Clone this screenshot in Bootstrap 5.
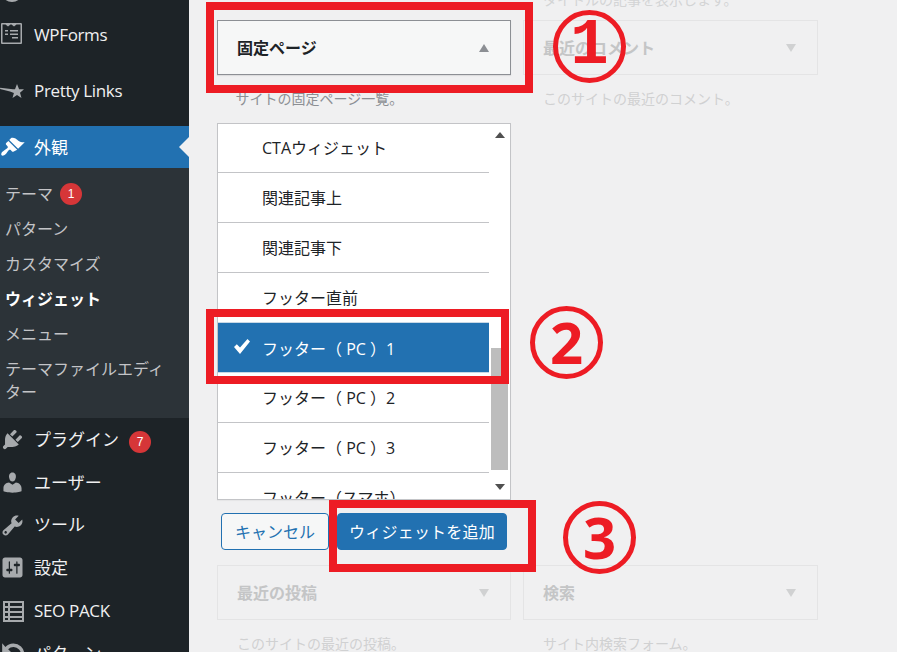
<!DOCTYPE html>
<html lang="ja"><head><meta charset="utf-8"><title>ウィジェット</title>
<link href="https://cdn.jsdelivr.net/npm/bootstrap@5.3.0/dist/css/bootstrap.min.css" rel="stylesheet">
<style>
html,body{height:652px;overflow:hidden}
body{background:#f0f0f1;font-family:"Open Sans","Noto Sans CJK JP",sans-serif;color:#1d2327;position:relative}
.stage{height:652px;overflow:hidden}
.side{width:189px;flex:none;background:#1d2327;color:#f0f0f1;height:652px;overflow:hidden;position:relative}
.clipicon{height:3px;overflow:hidden;margin-bottom:11px}
.clipicon svg{display:block;margin:-21px 0 0 2px}
.mitem{height:42.7px;padding-left:2px;font-size:17px;gap:9px;white-space:nowrap}
.mitem svg{width:25px;height:25px;flex:none;fill:#a7aaad;margin:0 0 0 -2px}
.mitem svg.wpf{width:21px;height:21px;margin:-3px 3px 0 -1px}
.mitem svg.pl{width:24px;height:15px;margin:0 1px 0 -2px}
.mgap{margin-bottom:14px;height:42px}
.latin{letter-spacing:-.35px}
.mactive{background:#2271b1;color:#fff;height:42px;padding-top:1px}
.mactive svg{fill:#fff}
.notch{position:absolute;right:0;top:137px;border:10px solid transparent;border-right-color:#f0f0f1;border-left-width:0}
.subm{background:#2c3338;padding:8.5px 0 7px;color:#c3c4c7;font-size:16px;height:250px;margin-bottom:.5px}
.subm a{display:flex;align-items:center;min-height:35.2px;padding-left:5px;line-height:23px;color:inherit;text-decoration:none;gap:7px}
.subm a.cur{color:#fff;font-weight:700}
.subm a.two{padding:6px 10px 6px 5px}
.cnt{width:22px;height:22px;background:#d63638;color:#fff;font-size:12px;display:inline-flex;align-items:center;justify-content:center;border-radius:50%;margin-left:10px;font-family:"Liberation Sans",sans-serif}
.subm .cnt{margin-left:0}
.wmain{flex:1;padding-left:28px;min-width:0}
.topline{grid-column:2;height:7px;font-size:14px;line-height:0;color:#d3d4d5;overflow:hidden;padding-left:20px;white-space:nowrap;margin-bottom:13px}
.wgrid{display:grid;grid-template-columns:294px 295px;column-gap:12px}
.wbox{height:55px;border:1px solid #e4e4e5;padding:0 19px;font-size:16px;font-weight:700;color:#c4c5c6}
.wbox.on{background:#f6f7f7;border-color:#8c8f94;color:#1d2327;box-shadow:0 1px 1px rgba(0,0,0,.08)}
.tri{width:0;height:0;border:5px solid transparent;border-top:8px solid #d0d1d2;border-bottom:0;margin-right:2px}
.tri.up{border-top:0;border-bottom:8px solid #8c8f94}
.wdesc{font-size:14px;color:#d0d1d2;padding:13px 18px 0 20px;height:48px;line-height:21px;white-space:nowrap}
.wdesc.on{color:#8c8f94;padding-left:18.500px}
.chooser{height:377px;border:1px solid #c3c4c7;background:#fff;overflow:hidden;box-shadow:0 1px 1px rgba(0,0,0,.04)}
.opts{width:271px;flex:none;border-radius:0;--bs-list-group-border-color:#c3c4c7}
.opts .list-group-item{flex:none;height:50px;padding:0 0 0 44px;border-width:0 0 1px;font-size:16px;color:#1d2327;display:flex;align-items:center;background:#fff;white-space:pre;position:relative}
.opts .list-group-item:first-child{height:49px}
.opts .list-group-item.sel{background:#2271b1;color:#fff;border:solid #c8d8e6;border-width:1px 0;padding-top:2px;padding-left:44px;margin-top:-1px;height:51px}
.opts .list-group-item.sel svg{position:absolute;left:15px;top:15px;width:18px;height:18px;fill:#fff}
.sbar{width:21px;padding:8px 0 0;height:100%;background:#fff}
.arrow{width:0;height:0;border:5px solid transparent;margin:0 auto}
.arrow.a1{border-top:0;border-bottom:6px solid #505050}
.arrow.a2{border-bottom:0;border-top:6px solid #505050;margin-top:14px}
.thumb{width:17px;height:122px;background:#bdbdbd;margin-top:210px;margin-left:2px}
.btnrow{height:65px;padding:13px 0 0 4px;gap:8px}
.btn.bcancel,.btn.badd{font-size:16px;height:37px;padding:0;border-radius:4px;line-height:34px;white-space:nowrap}
.btn.bcancel{width:108px;color:#2271b1;border-color:#2271b1;background:#f6f7f7}
.btn.badd{width:170px;background:#2271b1;border-color:#2271b1;color:#fff;letter-spacing:.2px}
.redbox{position:absolute;border:8px solid #ed1c24;pointer-events:none}
.rb1{left:206px;top:2px;width:327px;height:91px}
.rb2{left:206px;top:309px;width:303px;height:75px}
.rb3{left:329px;top:500px;width:207px;height:72px}
.num{position:absolute;width:73px;height:73px;border:5px solid #ed1c24;border-radius:50%;color:#ed1c24;font:700 58px/61px "Noto Sans","Open Sans",sans-serif;text-align:center}
.n1{left:553px;top:10px;font-family:"Liberation Mono",monospace;font-size:64px;line-height:62px}.n2{left:530px;top:306px}.n3{left:563px;top:501px}
</style></head><body>
<div class="stage d-flex">
<nav class="side">
 <div class="clipicon"><svg width="20" height="24" viewBox="0 0 20 24"><circle cx="10" cy="12" r="10" fill="none" stroke="#a7aaad" stroke-width="2"/></svg></div>
 <div class="mitem mgap d-flex align-items-center"><svg class="wpf" viewBox="1 1 21 21"><path fill-rule="evenodd" d="M2 1h19a1.500 1.500 0 0 1 1 1v19a1 1 0 0 1-1 1H2a1 1 0 0 1-1-1V2a1 1 0 0 1 1-1zm.500 1.500v18h18v-18h-4l-2.500 2-2.500-2h-1l-2.500 2-2.500-2zM5 8h3v1.500H5zm5 0h8v1.500h-8zM5 11.500h3V13H5zm5 0h8V13h-8zM12 15h6v1.500h-6z"/></svg><span class="latin">WPForms</span></div>
 <div class="mitem mgap d-flex align-items-center"><svg class="pl" viewBox="0 0 24 15"><path d="M17 0l2.100 5.300H24l-4 3.500 1.500 5.200-4.500-3-4.500 3 1.400-5L10 7.500 0 5 .2 3.800 13 5.300h2z"/></svg><span class="latin">Pretty Links</span></div>
 <div class="mitem mactive d-flex align-items-center"><svg viewBox="0 0 20 20"><path d="M14.480 11.060L7.410 3.990l1.500-1.500c.5-.56 2.300-.47 3.510.32 1.210.8 1.430 1.280 2.910 2.100 1.180.64 2.450 1.260 4.450.85zm-.71.71L6.700 4.700 4.930 6.470c-.39.39-.39 1.020 0 1.410l1.060 1.060c.39.39.39 1.030 0 1.420-.6.6-1.430 1.110-2.210 1.690-.35.26-.7.53-1.010.84C1.430 13.710 1 14.650 1 15.500c0 .28.11.53.29.71.19.19.45.29.71.29.86 0 1.790-.43 2.630-1.230.29-.3.56-.65.82-1.010.58-.78 1.100-1.610 1.690-2.210.39-.39 1.030-.39 1.420 0l1.060 1.060c.39.39 1.020.39 1.410 0z"/></svg><span>外観</span></div>
 <div class="notch"></div>
 <div class="subm">
  <a href="#">テーマ <span class="cnt">1</span></a><a href="#">パターン</a><a href="#">カスタマイズ</a><a href="#" class="cur">ウィジェット</a><a href="#">メニュー</a><a href="#" class="two">テーマファイルエディター</a>
 </div>
 <div class="mitem d-flex align-items-center"><svg viewBox="0 0 20 20"><path d="M13.110 4.360L9.870 7.600 8 5.730l3.240-3.240c.35-.34 1.050-.2 1.560.32.52.51.66 1.210.31 1.550zm-8 1.770l.91-1.120 9.010 9.010-1.190.84c-.71.71-2.630 1.160-3.820 1.160H6.140L4.900 17.260c-.59.59-1.540.59-2.120 0-.59-.58-.59-1.530 0-2.120l1.240-1.240v-3.880c0-1.130.4-3.190 1.090-3.890zm7.260 3.970l3.240-3.240c.34-.35 1.040-.21 1.550.31.52.51.66 1.210.31 1.550l-3.240 3.250z"/></svg><span>プラグイン<span class="cnt">7</span></span></div>
 <div class="mitem d-flex align-items-center"><svg viewBox="0 0 20 20"><path d="M10 9.250c-2.270 0-2.730-3.440-2.730-3.440C7 4.020 7.820 2 9.970 2c2.160 0 2.980 2.020 2.710 3.810 0 0-.41 3.440-2.680 3.440zm0 2.570L12.720 10c2.390 0 4.520 2.330 4.520 4.530v2.490s-3.650 1.130-7.240 1.130c-3.650 0-7.240-1.130-7.240-1.130v-2.490c0-2.250 1.940-4.480 4.470-4.480z"/></svg><span>ユーザー</span></div>
 <div class="mitem d-flex align-items-center"><svg viewBox="0 0 20 20"><path d="M16.680 9.770c-1.340 1.340-3.300 1.670-4.950.99l-5.410 6.520c-.99.99-2.590.99-3.580 0s-.99-2.590 0-3.570l6.520-5.420c-.68-1.650-.35-3.610.99-4.950 1.280-1.280 3.120-1.620 4.720-1.060l-2.890 2.890 2.820 2.820 2.860-2.870c.53 1.580.18 3.390-1.080 4.650zM3.810 16.210c.4.39 1.040.39 1.430 0 .4-.4.4-1.040 0-1.430-.39-.4-1.030-.4-1.430 0-.39.39-.39 1.030 0 1.430z"/></svg><span>ツール</span></div>
 <div class="mitem d-flex align-items-center"><svg viewBox="0 0 20 20"><path d="M18 16V4c0-1.100-.9-2-2-2H4c-1.100 0-2 .9-2 2v12c0 1.100.9 2 2 2h12c1.100 0 2-.9 2-2zM8 11h1c.55 0 1 .45 1 1s-.45 1-1 1H8v1.500c0 .28-.22.5-.5.5s-.5-.22-.5-.5V13H6c-.55 0-1-.45-1-1s.45-1 1-1h1V5.500c0-.28.22-.5.5-.5s.5.22.5.5V11zm5-2h-1c-.55 0-1-.45-1-1s.45-1 1-1h1V5.500c0-.28.22-.5.5-.5s.5.22.5.5V7h1c.55 0 1 .45 1 1s-.45 1-1 1h-1v5.500c0 .28-.22.5-.5.5s-.5-.22-.5-.5V9z"/></svg><span>設定</span></div>
 <div class="mitem d-flex align-items-center"><svg viewBox="0 0 25 25"><path fill-rule="evenodd" d="M3 3h21v21H3zm2 2v3h3V5zm5 0v3h12V5zM5 10v3h3v-3zm5 0v3h12v-3zM5 15v3h3v-3zm5 0v3h12v-3zM5 20v2h3v-2zm5 0v2h12v-2z"/></svg><span class="latin">SEO PACK</span></div>
 <div class="mitem d-flex align-items-center"><svg viewBox="0 0 23 23"><path d="M5 5.500A10 10 0 1 1 5 19l2-2A7 7 0 1 0 7.500 7.500L11 11H2V2z"/></svg><span>パターン</span></div>
</nav>
<main class="wmain">
 <div class="wgrid">
  <div></div><div class="topline">タイトルの記事を表示します。</div>
  <div><div class="wbox on d-flex align-items-center justify-content-between"><span>固定ページ</span><span class="tri up"></span></div><div class="wdesc on">サイトの固定ページ一覧。</div></div>
  <div><div class="wbox d-flex align-items-center justify-content-between"><span>最近のコメント</span><span class="tri"></span></div><div class="wdesc">このサイトの最近のコメント。</div></div>
  <div>
   <div class="chooser d-flex">
    <div class="list-group opts">
     <div class="list-group-item">CTAウィジェット</div>
     <div class="list-group-item">関連記事上</div>
     <div class="list-group-item">関連記事下</div>
     <div class="list-group-item">フッター直前</div>
     <div class="list-group-item sel"><svg viewBox="0 0 18 18"><path d="M1 9l2.800-2.800L7 9.500 14.500 1 17 3.500 7 16z"/></svg>フッター（ PC ）1</div>
     <div class="list-group-item">フッター（ PC ）2</div>
     <div class="list-group-item">フッター（ PC ）3</div>
     <div class="list-group-item">フッター（スマホ）</div>
    </div>
    <div class="sbar"><div class="arrow a1"></div><div class="thumb"></div><div class="arrow a2"></div></div>
   </div>
   <div class="btnrow d-flex"><button class="btn bcancel">キャンセル</button><button class="btn badd">ウィジェットを追加</button></div>
  </div>
  <div></div>
  <div><div class="wbox d-flex align-items-center justify-content-between"><span>最近の投稿</span><span class="tri"></span></div><div class="wdesc">このサイトの最近の投稿。</div></div>
  <div><div class="wbox d-flex align-items-center justify-content-between"><span>検索</span><span class="tri"></span></div><div class="wdesc">サイト内検索フォーム。</div></div>
 </div>
</main>
</div>
<div class="redbox rb1"></div><div class="redbox rb2"></div><div class="redbox rb3"></div>
<div class="num n1">1</div><div class="num n2">2</div><div class="num n3">3</div>
<script src="https://cdn.jsdelivr.net/npm/bootstrap@5.3.0/dist/js/bootstrap.bundle.min.js"></script>
</body></html>
